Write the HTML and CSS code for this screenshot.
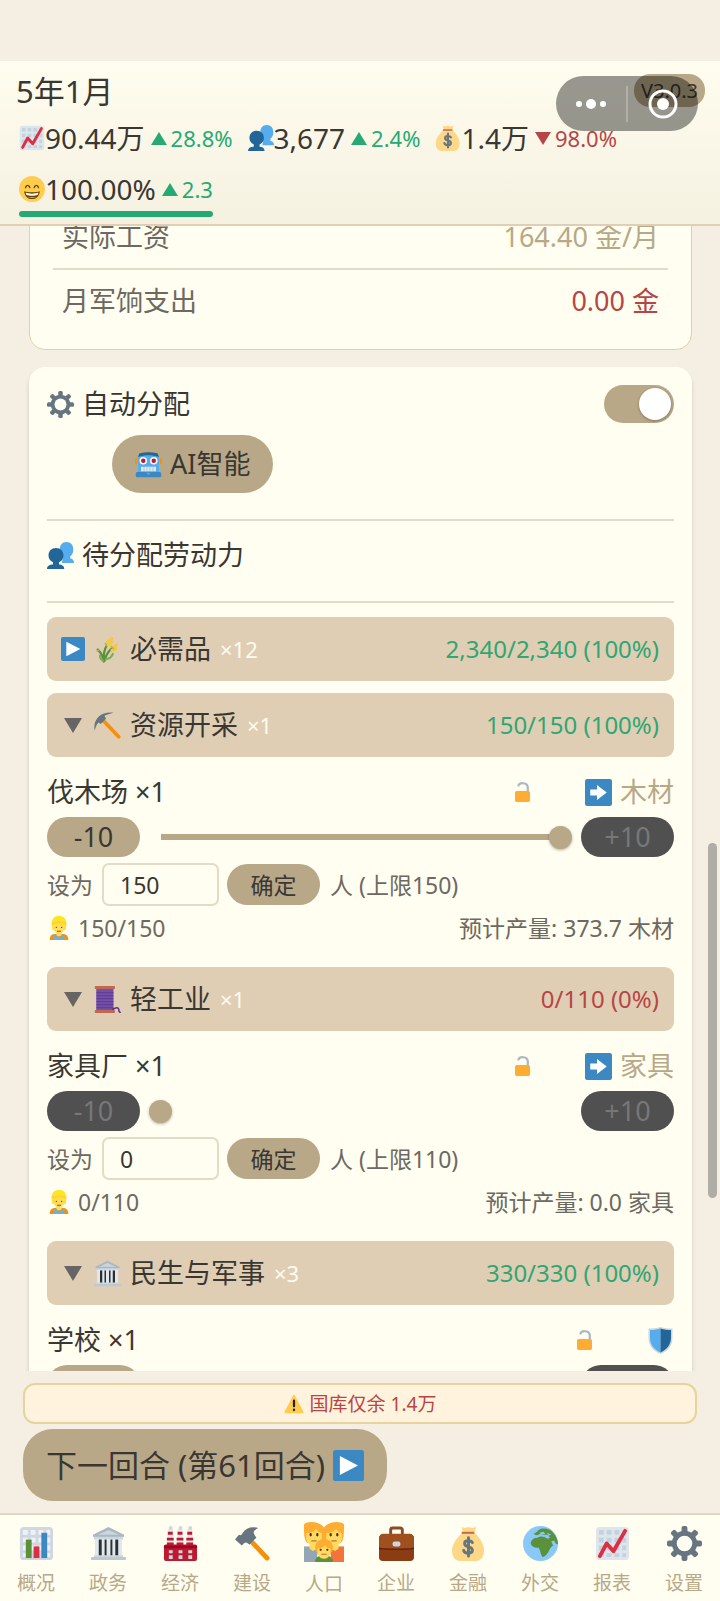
FILE: index.html
```html
<!DOCTYPE html>
<html lang="zh-CN">
<head>
    <meta charset="UTF-8">
    <meta name="viewport" content="width=device-width, initial-scale=1.0">
    <title>人口</title>
    <link rel="stylesheet" href="styles.css">
</head>
<body>
    <!-- 图标 -->
    <svg class="sprite" aria-hidden="true">
        <symbol id="i-chart" viewBox="0 0 36 36">
            <rect x="1" y="1" width="34" height="34" rx="4" fill="#dfe5ec"/>
            <path fill="#c3d3de" d="M4 4h5v5H4zM12 4h5v5h-5zM20 4h5v5h-5zM28 4h4v5h-4zM4 12h5v5H4zM12 12h5v5h-5zM20 12h5v5h-5zM28 12h4v5h-4zM4 20h5v5H4zM12 20h5v5h-5zM20 20h5v5h-5zM28 20h4v5h-4zM4 28h5v4H4zM12 28h5v4h-5zM20 28h5v4h-5zM28 28h4v4h-4z"/>
            <path fill="none" stroke="#dd2e44" stroke-width="4" stroke-linecap="round" stroke-linejoin="round" d="M5 31l7-13 7 8L31 5"/>
        </symbol>
        <symbol id="i-bars" viewBox="0 0 36 36">
            <rect x="1" y="1" width="34" height="34" rx="4" fill="#cfd8e0"/>
            <path fill="#eef2f5" d="M4 4h5v5H4zM12 4h5v5h-5zM20 4h5v5h-5zM28 4h4v5h-4zM4 12h5v5H4zM12 12h5v5h-5zM20 12h5v5h-5zM28 12h4v5h-4zM4 20h5v5H4zM12 20h5v5h-5zM20 20h5v5h-5zM28 20h4v5h-4zM4 28h5v4H4zM28 28h4v4h-4z"/>
            <path fill="#5c913b" d="M7 14h6v19H7z"/>
            <path fill="#dd2e44" d="M15 21h6v12h-6z"/>
            <path fill="#3b88c3" d="M23 7h6v26h-6z"/>
        </symbol>
        <symbol id="i-people" viewBox="0 0 36 36">
            <path fill="#55acee" d="M21 20c-3-2-4-5-4-9 0-7 3-11 9-11s9 4 9 10c0 4-1 7-4 9v3c3 0 5 2 5 6H20z"/>
            <path fill="#226699" d="M8 30v-3c-4-2-6-5-6-9 0-6 4-10 10-10s10 4 10 10c0 4-2 7-6 9v3c4 0 7 2 7 6H0c0-4 3-6 8-6z"/>
        </symbol>
        <symbol id="i-money" viewBox="0 0 36 36">
            <path fill="#fdd888" d="M11 1l3 1 4-1 4 1 4-1-2 6c4 3 10 11 10 18 0 8-4 11-8 11H9c-4 0-8-3-8-11C1 18 8 10 12 7z"/>
            <path fill="#bf6952" d="M11 6h13v2H11z"/>
            <path fill="none" stroke="#67757f" stroke-width="3" stroke-linecap="round" d="M22 17c-1-2-8-3-8 1 0 5 8 2 8 7 0 4-8 4-9 0M18 12v19"/>
        </symbol>
        <symbol id="i-smile" viewBox="0 0 36 36">
            <circle cx="18" cy="18" r="18" fill="#ffcc4d"/>
            <path fill="none" stroke="#664500" stroke-width="2" stroke-linecap="round" d="M9 16c1-4 5-4 6 0M21 16c1-4 5-4 6 0"/>
            <path fill="#664500" d="M7 21c5 2 17 2 22 0-1 7-5 11-11 11S8 28 7 21z"/>
            <path fill="#fff" d="M9 23c5 2 13 2 18 0l-1 3c-4 2-12 2-16 0zM12 29c4 1 8 1 12 0-3 2-9 2-12 0z"/>
        </symbol>
        <symbol id="i-gear" viewBox="0 0 36 36">
            <g fill="#66757f">
                <rect x="15" y="0" width="6" height="36" rx="2"/>
                <rect x="15" y="0" width="6" height="36" rx="2" transform="rotate(45 18 18)"/>
                <rect x="15" y="0" width="6" height="36" rx="2" transform="rotate(90 18 18)"/>
                <rect x="15" y="0" width="6" height="36" rx="2" transform="rotate(135 18 18)"/>
                <circle cx="18" cy="18" r="13"/>
            </g>
            <circle cx="18" cy="18" r="8" fill="#fffef0"/>
        </symbol>
        <symbol id="i-robot" viewBox="0 0 36 36">
            <path fill="#f4900c" d="M0 12c0-2 2-3 3-3v9c-2 0-3-1-3-3zM36 12c0-2-2-3-3-3v9c2 0 3-1 3-3zM14 2c0-2 8-2 8 0z"/>
            <path fill="#55acee" d="M4 6c8-3 20-3 28 0v24H4z"/>
            <path fill="#226699" d="M6 3c8-2 16-2 24 0l2 5c-9-3-19-3-28 0z"/>
            <rect x="1" y="28" width="34" height="7" rx="2" fill="#3b88c3"/>
            <circle cx="11" cy="13" r="5" fill="#fff"/>
            <circle cx="25" cy="13" r="5" fill="#fff"/>
            <circle cx="11" cy="13" r="3" fill="#be1931"/>
            <circle cx="25" cy="13" r="3" fill="#be1931"/>
            <path fill="#e1e8ed" d="M8 21h20v6H8z"/>
            <path stroke="#99bcd8" d="M12 21v6M16 21v6M20 21v6M24 21v6"/>
            <path fill="#55acee" d="M15 29h6l-3 3z"/>
        </symbol>
        <symbol id="i-play" viewBox="0 0 36 36">
            <rect width="36" height="36" rx="3" fill="#3b88c3"/>
            <path fill="#fff" d="M8 7l21 11L8 29z"/>
        </symbol>
        <symbol id="i-next" viewBox="0 0 36 36">
            <rect width="36" height="36" rx="3" fill="#3b88c3"/>
            <path fill="#fff" d="M7 14h9V8l13 10-13 10v-6H7z"/>
        </symbol>
        <symbol id="i-rice" viewBox="0 0 36 36">
            <path fill="none" stroke="#5c913b" stroke-width="3" stroke-linecap="round" d="M13 34C12 26 9 22 5 18M13 34c-1-10 1-17 5-23M14 33c2-9 6-14 12-18"/>
            <path fill="none" stroke="#77b255" stroke-width="3" stroke-linecap="round" d="M12 33c-3-2-4-4-4-7M16 31c5-1 8-4 9-7"/>
            <path fill="none" stroke="#f4c83f" stroke-width="4" stroke-linecap="round" d="M17 9l7-6M19 12l5-4M26 15l4-3M24 19l5-2"/>
            <path fill="none" stroke="#a8b856" stroke-width="2" stroke-linecap="round" d="M6 19l-2 1M17 13l-2-3M26 17l-3-3"/>
        </symbol>
        <symbol id="i-pick" viewBox="0 0 36 36">
            <path fill="none" stroke="#f4900c" stroke-width="5" stroke-linecap="round" d="M11 10l22 23"/>
            <path fill="#66757f" d="M1 25C-2 10 9-1 26 1c-7 2-10 3-12 4l2 4-7 7-3-2c-3 3-4 7-5 11z"/>
        </symbol>
        <symbol id="i-hammer" viewBox="0 0 36 36">
            <path fill="none" stroke="#f4900c" stroke-width="5" stroke-linecap="round" d="M16 15l17 18"/>
            <path fill="#66757f" d="M0 14l4-5c2 1 3 0 4-2 3-5 9-7 16-5-4 2-6 4-4 7l2 3-7 7c-3-2-4-3-6-1l-2 2z"/>
        </symbol>
        <symbol id="i-thread" viewBox="0 0 36 36">
            <path fill="#7450a8" d="M3 4h23v28H3z"/>
            <path fill="none" stroke="#55308d" d="M3 9h23M3 13h23M3 17h23M3 21h23M3 25h23M3 29h23"/>
            <path fill="none" stroke="#55308d" stroke-width="2" stroke-linecap="round" d="M25 31c4-2 7-3 8 0 0 2 1 4 2 4"/>
            <rect x="1" y="0" width="27" height="4" rx="1" fill="#bf6952"/>
            <rect x="1" y="32" width="27" height="4" rx="1" fill="#bf6952"/>
        </symbol>
        <symbol id="i-bank" viewBox="0 0 36 36">
            <path fill="#292f33" d="M5 13h26v18H5z"/>
            <path fill="#ccd6dd" d="M3 10h30v4H3z"/>
            <path fill="#e1e8ed" d="M4 13h4v18H4zM11 13h3v18h-3zM16 13h4v18h-4zM22 13h3v18h-3zM28 13h4v18h-4z"/>
            <path fill="#aab8c2" d="M18 1L2 9v2h32V9z"/>
            <path fill="#ccd6dd" d="M18 4L7 9h22zM3 30h30v3H3z"/>
            <rect y="32" width="36" height="3" rx="1" fill="#bdc9d1"/>
        </symbol>
        <symbol id="i-lock" viewBox="0 0 27 36">
            <path fill="none" stroke="#aab8c2" stroke-width="4" d="M6 8c1-8 17-8 17 2v8"/>
            <rect y="16" width="27" height="20" rx="3" fill="#ffac33"/>
        </symbol>
        <symbol id="i-shield" viewBox="0 0 36 36">
            <path fill="#ccd6dd" d="M18 0c5 2 10 2 16 2v12c0 11-6 18-16 22C8 32 2 25 2 14V2c6 0 11 0 16-2z"/>
            <path fill="#55acee" d="M18 2C13 4 9 4 4 4v10c0 9 5 16 14 20z"/>
            <path fill="#226699" d="M18 2c5 2 9 2 14 2v10c0 9-5 16-14 20z"/>
        </symbol>
        <symbol id="i-worker" viewBox="0 0 36 36">
            <path fill="#f4900c" d="M4 36c0-6 3-9 8-9h12c5 0 8 3 8 9z"/>
            <path fill="#6fb0d6" d="M10 28h4l1 3h6l1-3h4v8H10z"/>
            <path fill="#ffdc5d" d="M14 22h8v6c-2 3-6 3-8 0z"/>
            <path fill="#ffe51e" d="M7 12C7 4 11 0 18 0s11 4 11 12l-1 9H8z"/>
            <path fill="#ffdc5d" d="M10 13h16v4c0 6-3 9-8 9s-8-3-8-9z"/>
            <path fill="#ffcc4d" d="M7 10c7-3 15-3 22 0v3c-7-3-15-3-22 0z"/>
            <circle cx="14" cy="17" r="1" fill="#662113"/>
            <circle cx="22" cy="17" r="1" fill="#662113"/>
            <path fill="none" stroke="#c1694f" stroke-width="2" d="M15 23h6"/>
        </symbol>
        <symbol id="i-warn" viewBox="0 0 36 36">
            <path fill="#ffcc4d" stroke="#ffcc4d" stroke-width="3" stroke-linejoin="round" d="M18 3l16 30H2z"/>
            <path fill="none" stroke="#231f20" stroke-width="4" stroke-linecap="round" d="M18 12v10M18 28v1"/>
        </symbol>
        <symbol id="i-factory" viewBox="0 0 36 36">
            <path fill="#e6e7e8" d="M5 3h5l1 17H4zM15 3h5l1 17h-7zM25 3h5l1 17h-7z"/>
            <path fill="#be1931" d="M5 6h5v3H5zM4 12h7v3H4zM4 17h7v3H4zM15 6h5v3h-5zM14 12h7v3h-7zM14 17h7v3h-7zM25 6h5v3h-5zM24 12h7v3h-7zM24 17h7v3h-7z"/>
            <circle cx="8" cy="2" r="2" fill="#ccd6dd"/>
            <circle cx="18" cy="2" r="2" fill="#ccd6dd"/>
            <circle cx="28" cy="2" r="2" fill="#ccd6dd"/>
            <rect x="1" y="19" width="34" height="17" rx="2" fill="#be1931"/>
            <path fill="#a0041e" d="M1 20h34v3H1z"/>
            <path fill="#ccd6dd" d="M6 25h4v3H6zM16 25h4v3h-4zM26 25h4v3h-4zM6 30h4v4H6zM16 30h4v4h-4zM26 30h4v4h-4z"/>
        </symbol>
        <symbol id="i-family" viewBox="0 0 36 36">
            <path fill="#94a5b5" d="M0 22h12v14H0z"/>
            <path fill="#f4733a" d="M24 22h12v14H24z"/>
            <path fill="#ffac33" d="M0 2c3-3 14-3 18 3v14H3c-3-3-3-8-3-17zM36 2c-3-3-14-3-18 3v14h15c3-3 3-8 3-17z"/>
            <path fill="#ffdc5d" d="M2 10c5 0 7-2 9-4 1 2 3 4 5 4v4c0 5-3 7-7 7s-7-2-7-7zM20 10c5 0 7-2 9-4 1 2 3 4 5 4v4c0 5-3 7-7 7s-7-2-7-7zM5 20h7v4l-4 2-3-2zM24 20h7v4l-3 2-4-2z"/>
            <path fill="#5c913b" d="M10 36c0-4 3-6 8-6s8 2 8 6z"/>
            <circle cx="18" cy="23" r="8" fill="#ffac33"/>
            <path fill="#ffdc5d" d="M12 24c4 0 5-1 7-3 1 2 3 3 5 3 0 6-2 9-6 9s-6-3-6-9z"/>
            <path stroke="#662113" stroke-width="2" stroke-linecap="round" d="M6 11v1M12 11v1M24 11v1M30 11v1M15 25v0M21 25v0"/>
            <path fill="none" stroke="#c1694f" stroke-linecap="round" d="M7 17h4M25 17h4M16 29h4"/>
        </symbol>
        <symbol id="i-case" viewBox="0 0 36 36">
            <path fill="none" stroke="#8a4b28" stroke-width="3" d="M12 9V4c0-2 1-2 2-2h8c1 0 2 1 2 2v5"/>
            <rect y="9" width="36" height="27" rx="4" fill="#8a3c13"/>
            <path fill="#a0501f" d="M0 12c0-2 2-4 4-4h28c2 0 4 2 4 4v9c0 2-2 2-4 2H4c-2 0-4 0-4-2z"/>
            <path fill="#662113" d="M0 22c10 2 26 2 36 0v2c-10 1-26 1-36 0z"/>
            <rect x="14" y="16" width="8" height="5" rx="2" fill="#ccd6dd"/>
        </symbol>
        <symbol id="i-globe" viewBox="0 0 36 36">
            <circle cx="18" cy="18" r="18" fill="#88c9f9"/>
            <path fill="#5c913b" d="M11 8c3-1 4-4 7-5 5-1 10 0 13 4 3 3 5 8 5 12-2 0-3-2-4-4l-3 1 2 4c-2 1-4 4-5 7-2 3-4 5-6 5-2-3-2-7-4-10-4 1-8-1-8-5 1-3 3-5 7-5 3-2 7-1 10 1l3-1-3-3-5 0-3-1c-1 2-4 2-6 0z"/>
            <path fill="#88c9f9" d="M17 7l4-1 2 2-4 1zM25 7l4 2-3 1z"/>
        </symbol>
    </svg>

    <header class="topbar">
        <h1>5年1月</h1>
        <div class="stats">
            <div class="stat">
                <svg class="icon"><use href="#i-chart"/></svg>
                <span class="stat-value">90.44万</span>
                <span class="change up">28.8%</span>
            </div>
            <div class="stat">
                <svg class="icon"><use href="#i-people"/></svg>
                <span class="stat-value">3,677</span>
                <span class="change up">2.4%</span>
            </div>
            <div class="stat">
                <svg class="icon"><use href="#i-money"/></svg>
                <span class="stat-value">1.4万</span>
                <span class="change down">98.0%</span>
            </div>
            <div class="stat mood">
                <svg class="icon"><use href="#i-smile"/></svg>
                <span class="stat-value">100.00%</span>
                <span class="change up">2.3</span>
            </div>
        </div>
        <span class="version">V3.0.3</span>
        <div class="capsule">
            <button type="button" aria-label="更多">
                <svg width="32" height="12" viewBox="0 0 32 12" fill="#fff"><circle cx="4" cy="6" r="3"/><circle cx="16" cy="6" r="5"/><circle cx="28" cy="6" r="3"/></svg>
            </button>
            <button type="button" aria-label="关闭">
                <svg width="30" height="30" viewBox="0 0 30 30"><circle cx="15" cy="15" r="13" fill="none" stroke="#fff" stroke-width="3"/><circle cx="15" cy="15" r="6" fill="#fff"/></svg>
            </button>
        </div>
    </header>

    <main>
        <section class="card wages">
            <div class="wage-row">
                <span>实际工资</span>
                <span class="tan">164.40 金/月</span>
            </div>
            <div class="wage-row">
                <span>月军饷支出</span>
                <span class="red">0.00 金</span>
            </div>
        </section>

        <section class="card labor">
            <div class="auto">
                <label for="auto"><svg class="icon"><use href="#i-gear"/></svg>自动分配</label>
                <input type="checkbox" id="auto" class="switch" checked>
            </div>
            <button type="button" class="ai-btn"><svg class="icon"><use href="#i-robot"/></svg>AI智能</button>
            <h2><svg class="icon"><use href="#i-people"/></svg>待分配劳动力</h2>

            <button type="button" class="category">
                <svg class="fold"><use href="#i-play"/></svg>
                <svg class="icon"><use href="#i-rice"/></svg>
                <span>必需品</span>
                <span class="count">×12</span>
                <span class="ratio green">2,340/2,340 (100%)</span>
            </button>

            <button type="button" class="category">
                <span class="fold open"></span>
                <svg class="icon"><use href="#i-pick"/></svg>
                <span>资源开采</span>
                <span class="count">×1</span>
                <span class="ratio green">150/150 (100%)</span>
            </button>
            <div class="building">
                <div class="name-row">
                    <h3>伐木场 ×1</h3>
                    <button type="button" class="lock" aria-label="锁定伐木场"><svg><use href="#i-lock"/></svg></button>
                    <svg class="icon"><use href="#i-next"/></svg>
                    <span class="tan">木材</span>
                </div>
                <div class="slider-row">
                    <button type="button" class="pill step">-10</button>
                    <input type="range" min="0" max="150" value="150" aria-label="伐木场人数">
                    <button type="button" class="pill step" disabled>+10</button>
                </div>
                <div class="set-row">
                    <label for="set-wood">设为</label>
                    <input type="text" id="set-wood" value="150">
                    <button type="button" class="pill">确定</button>
                    <span>人 (上限150)</span>
                </div>
                <div class="info-row">
                    <span><svg class="icon"><use href="#i-worker"/></svg>150/150</span>
                    <span>预计产量: 373.7 木材</span>
                </div>
            </div>

            <button type="button" class="category">
                <span class="fold open"></span>
                <svg class="icon"><use href="#i-thread"/></svg>
                <span>轻工业</span>
                <span class="count">×1</span>
                <span class="ratio red">0/110 (0%)</span>
            </button>
            <div class="building">
                <div class="name-row">
                    <h3>家具厂 ×1</h3>
                    <button type="button" class="lock" aria-label="锁定家具厂"><svg><use href="#i-lock"/></svg></button>
                    <svg class="icon"><use href="#i-next"/></svg>
                    <span class="tan">家具</span>
                </div>
                <div class="slider-row">
                    <button type="button" class="pill step" disabled>-10</button>
                    <input type="range" class="empty" min="0" max="110" value="0" aria-label="家具厂人数">
                    <button type="button" class="pill step" disabled>+10</button>
                </div>
                <div class="set-row">
                    <label for="set-furniture">设为</label>
                    <input type="text" id="set-furniture" value="0">
                    <button type="button" class="pill">确定</button>
                    <span>人 (上限110)</span>
                </div>
                <div class="info-row">
                    <span><svg class="icon"><use href="#i-worker"/></svg>0/110</span>
                    <span>预计产量: 0.0 家具</span>
                </div>
            </div>

            <button type="button" class="category">
                <span class="fold open"></span>
                <svg class="icon"><use href="#i-bank"/></svg>
                <span>民生与军事</span>
                <span class="count">×3</span>
                <span class="ratio green">330/330 (100%)</span>
            </button>
            <div class="building">
                <div class="name-row">
                    <h3>学校 ×1</h3>
                    <button type="button" class="lock" aria-label="锁定学校"><svg><use href="#i-lock"/></svg></button>
                    <svg class="icon"><use href="#i-shield"/></svg>
                </div>
                <div class="slider-row">
                    <button type="button" class="pill step" aria-label="减少"></button>
                    <input type="range" min="0" max="100" value="100" aria-label="学校人数">
                    <button type="button" class="pill step" aria-label="增加" disabled></button>
                </div>
            </div>
        </section>
    </main>
    <div class="scrollbar"></div>

    <div class="actions">
        <div class="warning"><svg><use href="#i-warn"/></svg>国库仅余 1.4万</div>
        <button type="button" class="next-turn">下一回合 (第61回合)<svg><use href="#i-play"/></svg></button>
    </div>

    <nav>
        <a href="#"><svg><use href="#i-bars"/></svg>概况</a>
        <a href="#"><svg><use href="#i-bank"/></svg>政务</a>
        <a href="#"><svg><use href="#i-factory"/></svg>经济</a>
        <a href="#"><svg><use href="#i-hammer"/></svg>建设</a>
        <a href="#" class="active"><svg><use href="#i-family"/></svg>人口</a>
        <a href="#"><svg><use href="#i-case"/></svg>企业</a>
        <a href="#"><svg><use href="#i-money"/></svg>金融</a>
        <a href="#"><svg><use href="#i-globe"/></svg>外交</a>
        <a href="#"><svg><use href="#i-chart"/></svg>报表</a>
        <a href="#"><svg><use href="#i-gear"/></svg>设置</a>
    </nav>
</body>
</html>
```
FILE: styles.css
```css
* {
    margin: 0;
    padding: 0;
    box-sizing: border-box;
}

body {
    height: 100vh;
    padding-top: 61px;
    display: flex;
    flex-direction: column;
    background: #f5eee2;
    color: #3a3733;
    font-family: "Noto Sans", "Noto Sans CJK SC", sans-serif;
    font-size: 27px;
    line-height: 36px;
    overflow: hidden;
    position: relative;
}

h1, h2, h3 {
    font-weight: 400;
    font-size: 27px;
}

button, input {
    font: inherit;
    color: inherit;
    border: none;
}

svg {
    display: block;
    flex: none;
}

.sprite {
    position: absolute;
    width: 0;
    height: 0;
}

.icon {
    width: 27px;
    height: 27px;
}

.tan {
    color: #b8a888;
}

.green {
    color: #2fa673;
}

.red {
    color: #b84545;
}

/* 顶部状态 */
.topbar {
    flex: none;
    position: relative;
    height: 165px;
    padding: 10px 16px 0;
    background: linear-gradient(#fffdef, #f5f1e1);
    border-bottom: 2px solid #e0cfb4;
}

.topbar h1 {
    font-size: 31px;
    line-height: 40px;
}

.stats {
    display: flex;
    flex-wrap: wrap;
    gap: 15px;
    padding: 9px 3px 0;
}

.stat {
    display: flex;
    align-items: center;
}

.stat .icon {
    width: 26px;
    height: 26px;
}

.stat-value {
    font-size: 28px;
}

.change {
    display: flex;
    align-items: center;
    gap: 4px;
    margin-left: 6px;
    font-size: 22px;
}

.change::before {
    content: "";
    border: 8px solid transparent;
}

.up {
    color: #27a974;
}

.up::before {
    border-bottom: 13px solid #27a974;
    border-top: none;
}

.down {
    color: #b84545;
}

.down::before {
    border-top: 13px solid #b84545;
    border-bottom: none;
}

.mood {
    position: relative;
}

.mood::after {
    content: "";
    position: absolute;
    left: 0;
    right: 0;
    bottom: -10px;
    height: 6px;
    border-radius: 3px;
    background: #27a974;
}

.version {
    position: absolute;
    top: 13px;
    right: 15px;
    padding: 0 7px;
    border-radius: 16px;
    background: #b8a888;
    font-size: 20px;
    line-height: 33px;
}

.capsule {
    position: absolute;
    top: 15px;
    right: 22px;
    width: 142px;
    height: 55px;
    display: flex;
    align-items: center;
    border-radius: 28px;
    background: rgba(0, 0, 0, 0.4);
}

.capsule button {
    flex: 1;
    height: 36px;
    display: flex;
    align-items: center;
    justify-content: center;
    background: none;
}

.capsule button + button {
    border-left: 2px solid rgba(255, 255, 255, 0.25);
}

/* 内容区 */
main {
    flex: 1;
    min-height: 0;
    overflow: hidden;
    padding: 0 28px 0 29px;
}

.card {
    background: #fffef0;
    border-radius: 16px;
}

.wages {
    margin-top: -21px;
    padding: 0 23px 17px;
    border: 1px solid #e0cfb4;
    color: #6d6962;
}

.wage-row {
    display: flex;
    justify-content: space-between;
    padding: 13px 9px;
}

.wage-row + .wage-row {
    border-top: 2px solid #e5dac6;
}

.labor {
    margin-top: 17px;
    padding: 18px 18px 0;
    box-shadow: 0 4px 4px rgba(0, 0, 0, 0.15);
}

.auto {
    display: flex;
    justify-content: space-between;
    align-items: center;
}

.auto label,
.labor h2,
.ai-btn {
    display: flex;
    align-items: center;
    gap: 8px;
}

.switch {
    appearance: none;
    width: 70px;
    height: 38px;
    padding: 3px;
    border-radius: 19px;
    background: #b8a888;
}

.switch::before {
    content: "";
    display: block;
    width: 32px;
    height: 32px;
    border-radius: 50%;
    background: #fff;
    box-shadow: 0 1px 3px rgba(0, 0, 0, 0.3);
}

.switch:checked::before {
    margin-left: auto;
}

.ai-btn {
    height: 58px;
    margin: 12px 0 0 65px;
    padding: 0 23px;
    border-radius: 29px;
    background: #b8a888;
}

.labor h2 {
    margin: 26px 0 14px;
    padding: 16px 0 28px;
    border-top: 2px solid #e5dac6;
    border-bottom: 2px solid #e5dac6;
}

.category {
    width: 100%;
    height: 64px;
    padding: 0 15px 0 14px;
    display: flex;
    align-items: center;
    border-radius: 9px;
    background: #e0ceb4;
    text-align: left;
}

.category + .category {
    margin-top: 12px;
}

.category .icon {
    margin: 0 9px;
}

.fold {
    width: 24px;
    height: 24px;
}

.open {
    display: flex;
    align-items: center;
    justify-content: center;
}

.open::before {
    content: "";
    border: 9px solid transparent;
    border-top: 15px solid #666563;
    border-bottom: none;
}

.count {
    margin-left: 9px;
    font-size: 22px;
    color: #fffaf0;
}

.ratio {
    margin-left: auto;
    font-size: 24px;
}

.building {
    padding: 17px 0 23px;
}

.name-row,
.slider-row,
.set-row,
.info-row,
.info-row span {
    display: flex;
    align-items: center;
}

.name-row h3 {
    margin-right: auto;
}

.name-row .tan {
    margin-left: 8px;
}

.lock {
    margin-right: 55px;
    background: none;
}

.lock svg {
    width: 15px;
    height: 20px;
}

.slider-row {
    gap: 9px;
    margin: 7px 0 6px;
}

.pill {
    width: 93px;
    height: 41px;
    border-radius: 21px;
    background: #b8a888;
    font-size: 23px;
}

.pill:disabled {
    background: #505050;
    color: #777;
}

.step {
    height: 40px;
    font-size: 27px;
}

input[type="range"] {
    appearance: none;
    flex: 1;
    min-width: 0;
    height: 24px;
    background: linear-gradient(#b8a888, #b8a888) center / calc(100% - 24px) 6px no-repeat;
}

input[type="range"].empty {
    background: none;
}

input[type="range"]::-webkit-slider-thumb {
    appearance: none;
    width: 23px;
    height: 23px;
    border-radius: 50%;
    background: #b8a888;
    box-shadow: 0 1px 3px rgba(0, 0, 0, 0.3);
}

.set-row,
.info-row {
    font-size: 23px;
    color: #6d6962;
}

.set-row input {
    width: 117px;
    height: 43px;
    margin: 0 8px 0 9px;
    padding: 0 16px;
    border: 2px solid #e5dac6;
    border-radius: 7px;
    background: none;
    color: #3a3733;
}

.set-row .pill {
    margin-right: 10px;
    color: #3a3733;
}

.info-row {
    justify-content: space-between;
    margin-top: 6px;
    line-height: 32px;
}

.info-row .icon {
    width: 24px;
    height: 24px;
    margin-right: 7px;
}

.scrollbar {
    position: absolute;
    top: 843px;
    right: 3px;
    width: 9px;
    height: 355px;
    border-radius: 5px;
    background: #b0aca6;
}

/* 底部操作 */
.actions {
    flex: none;
    padding: 12px 23px;
}

.warning {
    display: flex;
    align-items: center;
    justify-content: center;
    gap: 6px;
    height: 41px;
    border: 2px solid #e8d29e;
    border-radius: 12px;
    background: #fff3de;
    color: #b84545;
    font-size: 19px;
}

.warning svg {
    width: 20px;
    height: 20px;
}

.next-turn {
    display: flex;
    align-items: center;
    gap: 8px;
    height: 72px;
    margin-top: 5px;
    padding: 0 23px;
    border-radius: 30px;
    background: #b8a888;
    font-size: 31px;
}

.next-turn svg {
    width: 31px;
    height: 31px;
}

nav {
    flex: none;
    display: flex;
    height: 88px;
    border-top: 2px solid #e0d6c2;
    background: #fffef0;
}

nav a {
    flex: 1;
    display: flex;
    flex-direction: column;
    align-items: center;
    gap: 8px;
    padding-top: 11px;
    color: #b8a888;
    font-size: 19px;
    line-height: 28px;
    text-decoration: none;
}

nav svg {
    width: 35px;
    height: 35px;
}

.active {
    padding-top: 7px;
}

.active svg {
    width: 40px;
    height: 40px;
}
```
